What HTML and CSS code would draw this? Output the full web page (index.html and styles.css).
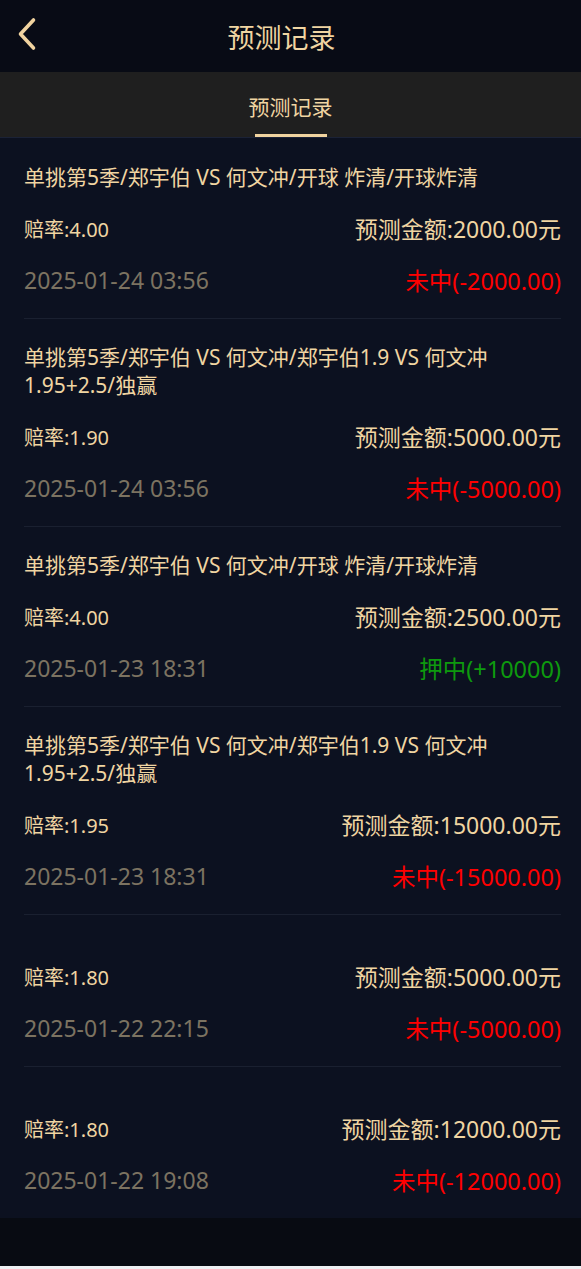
FILE: index.html
```html
<!DOCTYPE html>
<html lang="zh-CN">
<head>
<meta charset="utf-8">
<title>预测记录</title>
<link rel="stylesheet" href="styles.css">
</head>
<body>
<div class="page">
  <header class="topbar">
    <a class="back" href="#" aria-label="返回">
      <svg width="20" height="34" viewBox="0 0 20 34"><path d="M16.5 3 L3.5 17 L16.5 31" fill="none" stroke="#f0d39f" stroke-width="3.6" stroke-linecap="round" stroke-linejoin="round"/></svg>
    </a>
    <h1 class="topbar-title">预测记录</h1>
  </header>
  <nav class="tabs">
    <div class="tab active">预测记录</div>
  </nav>
  <main class="list">
    <div class="item">
      <div class="title">单挑第5季/郑宇伯 VS 何文冲/开球 炸清/开球炸清</div>
      <div class="row"><span class="odds">赔率:4.00</span><span class="amount">预测金额:2000.00元</span></div>
      <div class="row second"><span class="date">2025-01-24 03:56</span><span class="result lose">未中(-2000.00)</span></div>
    </div>
    <div class="item">
      <div class="title">单挑第5季/郑宇伯 VS 何文冲/郑宇伯1.9 VS 何文冲<br>1.95+2.5/独赢</div>
      <div class="row"><span class="odds">赔率:1.90</span><span class="amount">预测金额:5000.00元</span></div>
      <div class="row second"><span class="date">2025-01-24 03:56</span><span class="result lose">未中(-5000.00)</span></div>
    </div>
    <div class="item">
      <div class="title">单挑第5季/郑宇伯 VS 何文冲/开球 炸清/开球炸清</div>
      <div class="row"><span class="odds">赔率:4.00</span><span class="amount">预测金额:2500.00元</span></div>
      <div class="row second"><span class="date">2025-01-23 18:31</span><span class="result win">押中(+10000)</span></div>
    </div>
    <div class="item">
      <div class="title">单挑第5季/郑宇伯 VS 何文冲/郑宇伯1.9 VS 何文冲<br>1.95+2.5/独赢</div>
      <div class="row"><span class="odds">赔率:1.95</span><span class="amount">预测金额:15000.00元</span></div>
      <div class="row second"><span class="date">2025-01-23 18:31</span><span class="result lose">未中(-15000.00)</span></div>
    </div>
    <div class="item">
      <div class="title"></div>
      <div class="row"><span class="odds">赔率:1.80</span><span class="amount">预测金额:5000.00元</span></div>
      <div class="row second"><span class="date">2025-01-22 22:15</span><span class="result lose">未中(-5000.00)</span></div>
    </div>
    <div class="item last">
      <div class="title"></div>
      <div class="row"><span class="odds">赔率:1.80</span><span class="amount">预测金额:12000.00元</span></div>
      <div class="row second"><span class="date">2025-01-22 19:08</span><span class="result lose">未中(-12000.00)</span></div>
    </div>
  </main>
  <div class="footer"></div>
</div>
</body>
</html>
```
FILE: styles.css
```css
html, body {
  margin: 0;
  padding: 0;
  background: #eef0f3;
}
body {
  font-family: "Noto Sans", "Noto Sans CJK SC", sans-serif;
  color: #f0d5a2;
}
.page {
  width: 581px;
}
.topbar {
  height: 72px;
  background: #080b15;
  display: flex;
  align-items: center;
  justify-content: center;
  position: relative;
}
.back {
  position: absolute;
  left: 17px;
  top: 17px;
  display: block;
  width: 20px;
  height: 34px;
}
.back svg { display: block; }
.topbar-title {
  margin: 0 18px 0 0;
  font-size: 27px;
  font-weight: normal;
  color: #f0d5a2;
  line-height: 1;
  padding-top: 2px;
}
.tabs {
  height: 65px;
  background: #1f1f1f;
  border-bottom: 1px solid #1b2236;
  display: flex;
  justify-content: center;
}
.tab {
  height: 65px;
  box-sizing: border-box;
  padding: 0 6px;
  font-size: 21px;
  line-height: 70px;
  color: #f0d5a2;
  position: relative;
}
.tab.active::after {
  content: "";
  position: absolute;
  bottom: 0;
  left: 50%;
  margin-left: -36px;
  width: 72px;
  height: 3px;
  background: #f0d39f;
}
.list {
  background: #0c1120;
}
.item {
  margin: 0 20px 0 24px;
  padding: 24px 0 24px;
  border-bottom: 1px solid #1a2030;
}
.item:first-child {
  padding-top: 25px;
}
.item.last {
  border-bottom: none;
}
.title {
  font-size: 21px;
  line-height: 28px;
  color: #f0d5a2;
}
.row {
  display: flex;
  justify-content: space-between;
  align-items: center;
  height: 28px;
  margin-top: 23px;
  white-space: nowrap;
}
.row.second {
  margin-top: 24px;
}
.odds {
  font-size: 20px;
  color: #f0d5a2;
}
.amount {
  font-size: 23px;
  color: #f0d5a2;
}
.date {
  font-size: 23px;
  color: #7c7361;
}
.result {
  font-size: 23.5px;
}
.result.lose { color: #ff0000; }
.result.win { color: #0e9a0e; }
.footer {
  height: 48px;
  background: #080b12;
}
```
